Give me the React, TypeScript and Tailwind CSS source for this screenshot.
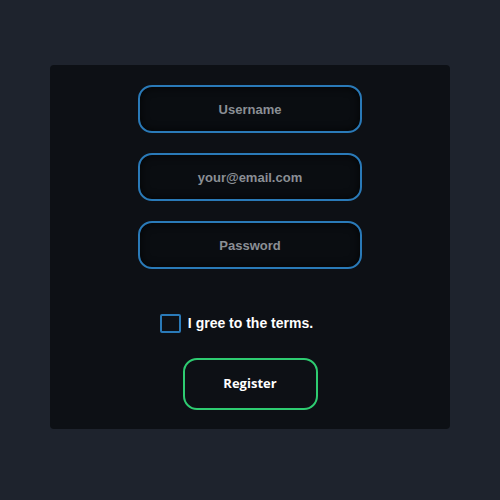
export default function App() {
  return (
    <div className="w-[500px] h-[500px] bg-[#1e232d] flex items-start justify-center pt-[65px]">
      <div className="w-[400px] h-[364px] bg-[#0d1015] rounded-[4px] flex flex-col items-center pt-[20px]">
        <div className="flex flex-col gap-[20px]">
          {["Username", "your@email.com", "Password"].map((p) => (
            <input
              key={p}
              placeholder={p}
              type={p === "Password" ? "password" : "text"}
              className="w-[224px] h-[48px] rounded-[14px] border-2 border-[#2a7ab8] bg-[#0a0d11] text-center text-[13px] font-bold text-white placeholder:text-[#8b8f95] outline-none shadow-[inset_0_0_8px_rgba(0,0,0,0.8)] font-['Liberation_Sans',sans-serif]"
            />
          ))}
        </div>
        <label className="mt-[44px] flex items-center gap-[7px] pr-[27px]">
          <span className="w-[21px] h-[19px] border-2 border-[#2a7ab8] rounded-[2px] bg-transparent" />
          <span className="text-white text-[14px] font-bold font-['Liberation_Sans',sans-serif]">I gree to the terms.</span>
        </label>
        <button className="mt-[24px] w-[135px] h-[52px] rounded-[14px] border-2 border-[#2ecc71] bg-transparent text-white text-[13px] font-bold font-['Open_Sans',sans-serif]">
          Register
        </button>
      </div>
    </div>
  );
}
